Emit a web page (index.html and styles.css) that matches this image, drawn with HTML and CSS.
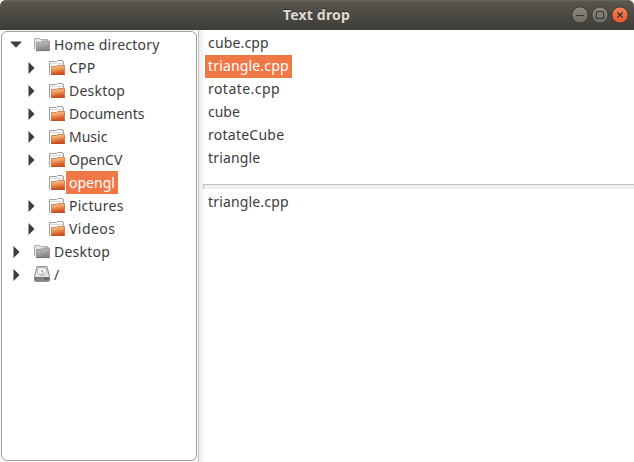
FILE: index.html
```
<!DOCTYPE html>
<html lang="en">
<head>
<meta charset="utf-8">
<title>Text drop</title>
<link rel="stylesheet" href="styles.css">
</head>
<body>
<svg class="defs" width="0" height="0" aria-hidden="true">
  <defs>
    <linearGradient id="orange" x1="0" y1="0" x2="0.25" y2="1"><stop offset="0" stop-color="#f8d3a0"/><stop offset=".5" stop-color="#ec9a5c"/><stop offset="1" stop-color="#d6501f"/></linearGradient>
    <linearGradient id="gray" x1="0" y1="0" x2="0.3" y2="1"><stop offset="0" stop-color="#c8c8c8"/><stop offset="1" stop-color="#868686"/></linearGradient>
    <linearGradient id="metal" x1="0" y1="0" x2="0" y2="1"><stop offset="0" stop-color="#d0d0d0"/><stop offset="1" stop-color="#eeeeee"/></linearGradient>
    <symbol id="folder" viewBox="0 0 16 16">
      <path d="M.5 14.5V1.5h7l1-1h5v1h1V5" fill="#fafafa" stroke="#a3a19f"/>
      <path d="M1 3.5h13" stroke="#dddbd9"/>
      <path d="M2.5 14V6.5h5l1-1h7V14z" fill="url(#orange)" stroke="#cf6f3d" stroke-width=".8"/>
      <path d="M2 14.4h14" stroke="#b93e18"/>
    </symbol>
    <symbol id="home" viewBox="0 0 16 16">
      <path d="M.5 12.5V1.5h5l1 1h7v2" fill="#e4e4e4" stroke="#b0b0b0"/>
      <path d="M2.5 13.5v-8h5l1-1.5h7v9.5z" fill="url(#gray)" stroke="#8e8e8e" stroke-width=".8"/>
      <path d="M2 13.6h14" stroke="#777"/>
    </symbol>
    <symbol id="disk" viewBox="0 0 16 16">
      <path d="M3 .5h10l2.5 10v4q0 1-1 1h-13q-1 0-1-1v-4z" fill="url(#metal)" stroke="#858585" stroke-width=".9"/>
      <ellipse cx="8" cy="5.3" rx="4.8" ry="3.8" fill="#f2f2f2" stroke="#b0b0b0" stroke-width=".8"/>
      <ellipse cx="8" cy="5" rx="1.2" ry=".9" fill="#aaa"/>
      <path d="M7 9.5L9.8 6.5" stroke="#888"/>
      <path d="M1 11h14v3.8H1z" fill="#6a6a6a"/>
      <path d="M2 12.2h8M2 13.8h8" stroke="#989898" stroke-width=".8"/>
    </symbol>
    <symbol id="right" viewBox="0 0 12 12"><path d="M3.5 0v12l6-6z" fill="#3c3c3c"/></symbol>
    <symbol id="down" viewBox="0 0 12 12"><path d="M0 2.5h12L6 8.8z" fill="#3c3c3c"/></symbol>
    <linearGradient id="knob" x1="0" y1="0" x2="0" y2="1"><stop offset="0" stop-color="#8b8981"/><stop offset="1" stop-color="#6b6962"/></linearGradient>
    <linearGradient id="knob-close" x1="0" y1="0" x2="0" y2="1"><stop offset="0" stop-color="#f78257"/><stop offset="1" stop-color="#e65527"/></linearGradient>
  </defs>
</svg>
<div class="window">
  <header class="titlebar">
    <h1 class="title">Text drop</h1>
    <div class="controls">
      <svg class="control" viewBox="0 0 18 18"><circle cx="9" cy="9" r="8.2"/><path d="M5 9.5h8"/></svg>
      <svg class="control" viewBox="0 0 18 18"><circle cx="9" cy="9" r="8.2"/><path d="M5.5 5.5h7v7h-7z"/></svg>
      <svg class="control close" viewBox="0 0 18 18"><circle cx="9" cy="9" r="8.2"/><path d="M6.5 6.5l5 5M11.5 6.5l-5 5"/></svg>
    </div>
  </header>
  <main class="content">
    <div class="side">
      <ul class="tree">
        <li class="row root"><svg class="arrow"><use href="#down"/></svg><svg class="icon"><use href="#home"/></svg><span class="label loose">Home directory</span></li>
        <li class="row"><svg class="arrow"><use href="#right"/></svg><svg class="icon"><use href="#folder"/></svg><span class="label loose">CPP</span></li>
        <li class="row"><svg class="arrow"><use href="#right"/></svg><svg class="icon"><use href="#folder"/></svg><span class="label loose">Desktop</span></li>
        <li class="row"><svg class="arrow"><use href="#right"/></svg><svg class="icon"><use href="#folder"/></svg><span class="label">Documents</span></li>
        <li class="row"><svg class="arrow"><use href="#right"/></svg><svg class="icon"><use href="#folder"/></svg><span class="label">Music</span></li>
        <li class="row"><svg class="arrow"><use href="#right"/></svg><svg class="icon"><use href="#folder"/></svg><span class="label">OpenCV</span></li>
        <li class="row"><svg class="arrow"></svg><svg class="icon"><use href="#folder"/></svg><span class="label selected">opengl</span></li>
        <li class="row"><svg class="arrow"><use href="#right"/></svg><svg class="icon"><use href="#folder"/></svg><span class="label loose">Pictures</span></li>
        <li class="row"><svg class="arrow"><use href="#right"/></svg><svg class="icon"><use href="#folder"/></svg><span class="label looser">Videos</span></li>
        <li class="row root"><svg class="arrow"><use href="#right"/></svg><svg class="icon"><use href="#home"/></svg><span class="label loose">Desktop</span></li>
        <li class="row root"><svg class="arrow"><use href="#right"/></svg><svg class="icon disk"><use href="#disk"/></svg><span class="label">/</span></li>
      </ul>
    </div>
    <div class="sash"></div>
    <div class="panes">
      <ul class="files">
        <li class="row"><span class="label snug">cube.cpp</span></li>
        <li class="row"><span class="label snug selected">triangle.cpp</span></li>
        <li class="row"><span class="label looser">rotate.cpp</span></li>
        <li class="row"><span class="label">cube</span></li>
        <li class="row"><span class="label loose">rotateCube</span></li>
        <li class="row"><span class="label snug">triangle</span></li>
      </ul>
      <div class="sash-row"></div>
      <ul class="dropped">
        <li class="row"><span class="label snug">triangle.cpp</span></li>
      </ul>
    </div>
  </main>
</div>
</body>
</html>
```
FILE: styles.css
```
* { box-sizing: border-box; }
body { margin: 0; background: #fff; font: 14px/23px "Noto Sans", sans-serif; color: #3c3c3c; }
ul { list-style: none; margin: 0; padding: 0; }
.defs { position: absolute; }
.window { display: flex; flex-direction: column; width: 634px; height: 462px; overflow: hidden; }
.titlebar {
  display: grid; grid-template-columns: 1fr auto 1fr; align-items: center;
  height: 30px; padding-right: 5px; flex: none;
  border-radius: 6px 6px 0 0;
  background: linear-gradient(#5a574e, #3d3c37);
  box-shadow: inset 0 1px #67645b;
}
.title { grid-column: 2; margin: 0 0 0 4px; font-size: 14px; font-weight: 700; letter-spacing: 0.2px; line-height: 30px; color: #dfdbd2; text-shadow: 0 -1px #2b2a27; }
.controls { display: flex; gap: 2px; justify-content: flex-end; }
.control { width: 18px; height: 18px; fill: url(#knob); stroke: #353430; stroke-width: 1; }
.close { fill: url(#knob-close); }
.close path { stroke-width: 1.4; }
.control path { fill: none; }
.content { display: flex; flex: 1; min-height: 0; }
.side { width: 198px; padding: 1px; background: #f9f9f8; }
.tree { height: 100%; border: 1px solid #a0a0a0; border-radius: 6px; background: #fff; padding: 1px 0 0 8px; }
.row { display: flex; align-items: center; height: 23px; }
.tree .row { padding-left: 15px; }
.tree .root { padding-left: 0; }
.arrow { width: 12px; height: 12px; flex: none; }
.icon { width: 16px; height: 16px; margin: 0 1px 0 12px; flex: none; }
.icon.disk { margin-top: -1px; }
.label { height: 23px; padding: 0 3px; white-space: nowrap; }
.snug { letter-spacing: 0.16px; }
.loose { letter-spacing: 0.25px; }
.looser { letter-spacing: 0.45px; }
.selected { background: #f07746; color: #fff; }
.sash { width: 5px; background: #f2f1f0; border-left: 1px solid #c4c1be; }
.panes { flex: 1; display: flex; flex-direction: column; background: #fff; }
.files { height: 154px; padding: 2px 0 0 2px; }
.panes .label { line-height: 21px; }
.sash-row { height: 5px; background: #f2f1f0; border-top: 1px solid #c4c1be; border-left: 1px solid #c4c1be; }
.dropped { padding: 2px 0 0 2px; }
.files .row:first-child { margin-top: 0; }
```
